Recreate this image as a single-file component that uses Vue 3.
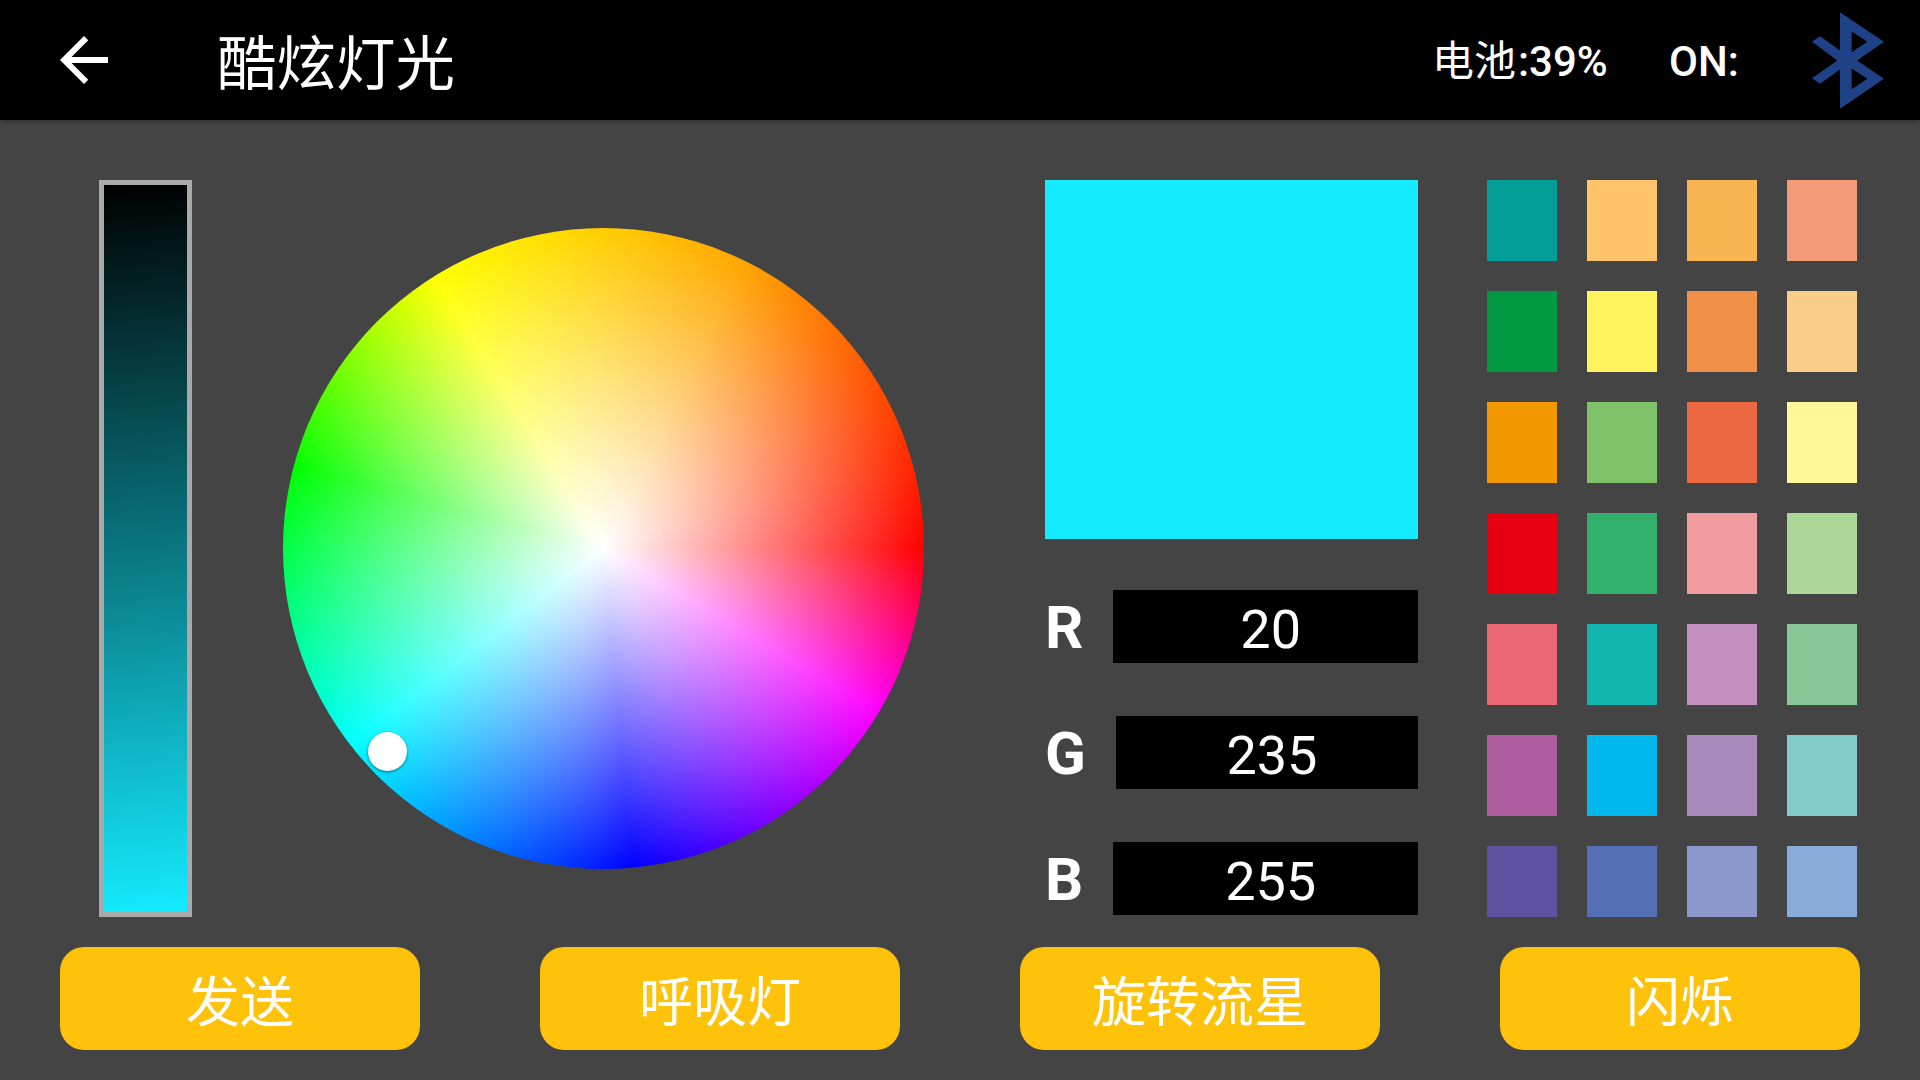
<script setup>
import { ref, computed } from 'vue'

const battery = ref(39)
const rgb = ref([
  { label: 'R', value: 20 },
  { label: 'G', value: 235 },
  { label: 'B', value: 255 },
])
const current = computed(() => `rgb(${rgb.value.map((c) => c.value).join(',')})`)

const swatches = [
  '#029d97', '#ffc36b', '#f9b552', '#f39b79',
  '#029943', '#fff45e', '#f19149', '#facd89',
  '#f39800', '#80c269', '#eb6841', '#fff799',
  '#e60012', '#32b16c', '#f29c9f', '#acd598',
  '#ea6876', '#13b5b1', '#c490bf', '#89c997',
  '#ae5da1', '#00b7ee', '#aa89bd', '#84ccc9',
  '#5f52a0', '#556fb5', '#8c97cb', '#88abda',
]
const actions = ['发送', '呼吸灯', '旋转流星', '闪烁']

function pick(hex) {
  rgb.value.forEach((c, i) => {
    c.value = parseInt(hex.slice(1 + i * 2, 3 + i * 2), 16)
  })
}
</script>

<template>
  <div class="screen">
    <header class="bar">
      <svg class="back" viewBox="0 0 24 24">
        <path d="M20 11H7.83l5.59-5.59L12 4l-8 8 8 8 1.41-1.41L7.83 13H20v-2z" fill="#fff" />
      </svg>
      <h1 class="title">酷炫灯光</h1>
      <div class="battery"><span class="cjk">电池</span>:{{ battery }}%</div>
      <div class="state">ON:</div>
      <svg class="bluetooth" viewBox="0 0 216 290">
        <path
          fill="#1f4287"
          fill-rule="evenodd"
          d="M84 0L216 89L135 145L216 200L84 290V172L24 215L0 198L76 145L0 89L24 72L84 115ZM119 58V120L166 89ZM119 169V231L166 200Z"
        />
      </svg>
    </header>

    <main class="content">
      <div class="brightness" :style="{ '--c': current }"></div>
      <div class="wheel">
        <span class="thumb"></span>
      </div>
      <section class="readout">
        <div class="preview" :style="{ background: current }"></div>
        <div v-for="c in rgb" :key="c.label" class="channel">
          <span class="name">{{ c.label }}</span>
          <span class="value">{{ c.value }}</span>
        </div>
      </section>
      <section class="swatches">
        <i v-for="s in swatches" :key="s" :style="{ background: s }" @click="pick(s)"></i>
      </section>
    </main>

    <footer class="actions">
      <button v-for="a in actions" :key="a"><span>{{ a }}</span></button>
    </footer>
  </div>
</template>

<style>
body {
  margin: 0;
  background: #444;
}
</style>

<style scoped>
.screen {
  width: 1920px;
  height: 1080px;
  background: #444;
  color: #fff;
  font-family: Roboto, 'Noto Sans CJK SC', sans-serif;
  display: flex;
  flex-direction: column;
  overflow: hidden;
}
.bar {
  height: 120px;
  flex: none;
  box-sizing: border-box;
  padding: 0 36px 0 48px;
  background: #000;
  box-shadow: 0 1px 4px rgba(0, 0, 0, 0.4);
  display: flex;
  align-items: center;
}
.back {
  width: 72px;
  height: 72px;
}
.title {
  margin: 0 auto 0 97px;
  font: 400 59.5px/70px 'Noto Sans CJK SC', sans-serif;
  padding-bottom: 2px;
}
.battery,
.state {
  font-size: 42px;
  font-weight: 500;
  line-height: 50px;
  padding-top: 3px;
}
.battery {
  width: 235px;
  white-space: nowrap;
}
.state {
  width: 143px;
}
.cjk {
  font-family: 'Noto Sans CJK SC', sans-serif;
  font-weight: 400;
  margin: 0 2px 0 -2px;
  vertical-align: -0.5px;
  line-height: 1;
}
.bluetooth {
  width: 72px;
  height: 97px;
}
.content {
  display: flex;
  height: 737px;
  padding: 60px 0 0 99px;
}
.brightness {
  box-sizing: border-box;
  width: 93px;
  height: 737px;
  border: 5px solid #a9a9a9;
  background: linear-gradient(174deg, #000, var(--c)) padding-box;
}
.wheel {
  position: relative;
  width: 641px;
  height: 641px;
  margin: 48px 0 0 91px;
  border-radius: 50%;
  background:
    radial-gradient(circle closest-side, #fff, rgba(255, 255, 255, 0)),
    conic-gradient(from 90deg, #f00 0deg, #f0f 30.7deg, #00f 84.7deg, #0ff 142.2deg, #0f0 194.8deg, #ff0 238deg, #ffa500 296deg, #f00 360deg);
}
.thumb {
  position: absolute;
  left: 84.5px;
  top: 503.5px;
  width: 39px;
  height: 39px;
  border-radius: 50%;
  background: #fff;
  box-shadow: 0 1px 3px rgba(0, 0, 0, 0.5);
}
.readout {
  width: 373px;
  margin-left: 121px;
}
.preview {
  height: 359px;
  margin-bottom: 51px;
}
.channel {
  display: flex;
  height: 73px;
  margin-bottom: 53px;
}
.name {
  font-size: 60px;
  font-weight: 700;
  line-height: 75px;
  margin-right: 30px;
}
.value {
  flex: 1;
  padding-left: 10px;
  background: #000;
  text-align: center;
  font-size: 54px;
  line-height: 79px;
}
.swatches {
  margin-left: 69px;
  display: grid;
  grid-template-columns: repeat(4, 70px);
  grid-template-rows: repeat(6, 81px) 71px;
  gap: 30px;
}
.actions {
  display: flex;
  gap: 120px;
  padding: 30px 60px 0;
}
.actions button {
  width: 360px;
  height: 103px;
  border: 0;
  padding: 0;
  border-radius: 24px;
  background: #ffc20a;
  color: #fff;
  font: 400 54px/64px 'Noto Sans CJK SC', sans-serif;
}
</style>
